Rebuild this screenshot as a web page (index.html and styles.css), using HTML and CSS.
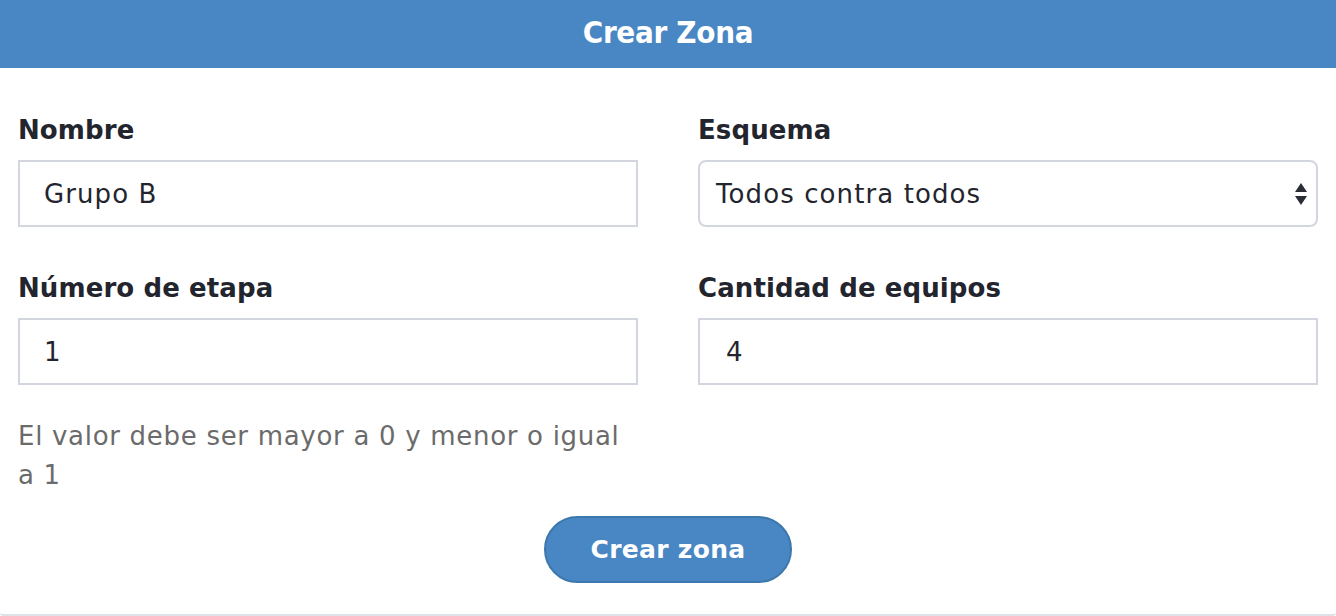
FILE: index.html
```html
<!DOCTYPE html>
<html lang="es">
<head>
<meta charset="utf-8">
<title>Crear Zona</title>
<link rel="stylesheet" href="styles.css">
</head>
<body>
<div class="card">
  <header class="card-header">Crear Zona</header>
  <form class="form">
    <div class="grid">
      <div class="field">
        <label class="label">Nombre</label>
        <div class="input">Grupo B</div>
      </div>
      <div class="field">
        <label class="label">Esquema</label>
        <div class="select">
          <span>Todos contra todos</span>
          <svg class="arrows" width="14" height="24" viewBox="0 0 14 24"><path d="M7 1 L13 10 L1 10 Z" fill="#2a2d36"/><path d="M1 14 L13 14 L7 23 Z" fill="#2a2d36"/></svg>
        </div>
      </div>
      <div class="field">
        <label class="label">Número de etapa</label>
        <div class="input">1</div>
        <p class="help">El valor debe ser mayor a 0 y menor o igual a 1</p>
      </div>
      <div class="field">
        <label class="label">Cantidad de equipos</label>
        <div class="input input-num">4</div>
      </div>
    </div>
    <div class="actions">
      <button type="button" class="btn">Crear zona</button>
    </div>
  </form>
</div>
</body>
</html>
```
FILE: styles.css
```css
html, body {
  margin: 0;
  padding: 0;
  background: #ffffff;
}
body {
  font-family: "DejaVu Sans", sans-serif;
  color: #23252e;
}
.card {
  box-sizing: border-box;
  height: 616px;
  border-bottom: 2px solid #dfe2e6;
  border-radius: 0 0 3px 3px;
}
.card-header {
  box-sizing: border-box;
  height: 68px;
  padding-bottom: 4px;
  background: #4886c4;
  color: #ffffff;
  font-family: "DejaVu Sans Condensed", "DejaVu Sans", sans-serif;
  font-weight: bold;
  font-size: 31px;
  display: flex;
  align-items: center;
  justify-content: center;
  letter-spacing: -0.3px;
}
.form {
  padding: 44px 18px 0 18px;
}
.grid {
  display: grid;
  grid-template-columns: 1fr 1fr;
  column-gap: 60px;
  row-gap: 43px;
  align-items: start;
}
.field {
  display: flex;
  flex-direction: column;
}
.label {
  font-weight: bold;
  font-size: 26px;
  line-height: 36px;
  letter-spacing: 0.1px;
  margin-bottom: 12px;
  color: #23252e;
}
.input {
  box-sizing: border-box;
  height: 67px;
  border: 2px solid #d3d6df;
  padding: 0 24px;
  display: flex;
  align-items: center;
  font-size: 26px;
  letter-spacing: 1.1px;
  color: #23252e;
}
.input-num {
  padding-left: 26px;
}
.select {
  box-sizing: border-box;
  height: 67px;
  border: 2px solid #d3d6df;
  border-radius: 8px;
  padding: 0 8px 0 16px;
  display: flex;
  align-items: center;
  justify-content: space-between;
  font-size: 26px;
  letter-spacing: 1.1px;
  color: #23252e;
}
.arrows {
  display: block;
}
.help {
  margin: 32px 0 0 0;
  font-size: 26px;
  line-height: 39px;
  letter-spacing: 0.7px;
  color: #6b6b6b;
}
.actions {
  display: flex;
  justify-content: center;
  margin-top: 21px;
}
.btn {
  box-sizing: border-box;
  width: 248px;
  height: 67px;
  border-radius: 34px;
  border: 2px solid #3d78ac;
  background: #4886c4;
  color: #ffffff;
  font-family: "DejaVu Sans", sans-serif;
  font-weight: bold;
  font-size: 25px;
  letter-spacing: 0.3px;
  cursor: pointer;
}
```
